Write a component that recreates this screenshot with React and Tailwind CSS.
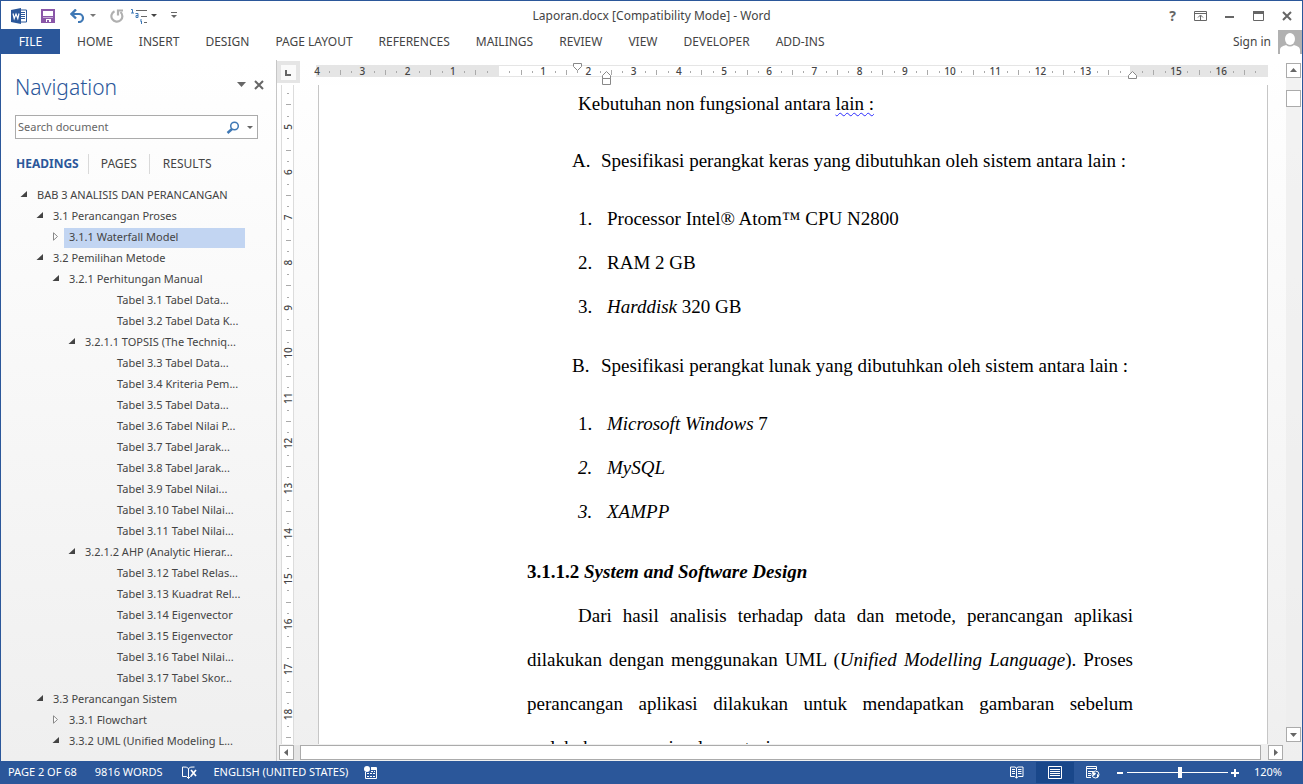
import React from "react";

const RIBBON_TABS = [
  "HOME", "INSERT", "DESIGN", "PAGE LAYOUT", "REFERENCES",
  "MAILINGS", "REVIEW", "VIEW", "DEVELOPER", "ADD-INS",
];

const INDENTS = ["pl-3", "pl-7", "pl-11", "pl-15", "pl-23"];

const HEADINGS = [
  { level: 0, state: "open", text: "BAB 3 ANALISIS DAN PERANCANGAN" },
  { level: 1, state: "open", text: "3.1 Perancangan Proses" },
  { level: 2, state: "closed", text: "3.1.1 Waterfall Model", selected: true },
  { level: 1, state: "open", text: "3.2 Pemilihan Metode" },
  { level: 2, state: "open", text: "3.2.1 Perhitungan Manual" },
  { level: 4, text: "Tabel 3.1 Tabel Data..." },
  { level: 4, text: "Tabel 3.2 Tabel Data K..." },
  { level: 3, state: "open", text: "3.2.1.1 TOPSIS (The Techniq..." },
  { level: 4, text: "Tabel 3.3 Tabel Data..." },
  { level: 4, text: "Tabel 3.4 Kriteria Pem..." },
  { level: 4, text: "Tabel 3.5 Tabel Data..." },
  { level: 4, text: "Tabel 3.6 Tabel Nilai P..." },
  { level: 4, text: "Tabel 3.7 Tabel Jarak..." },
  { level: 4, text: "Tabel 3.8 Tabel Jarak..." },
  { level: 4, text: "Tabel 3.9 Tabel Nilai..." },
  { level: 4, text: "Tabel 3.10 Tabel Nilai..." },
  { level: 4, text: "Tabel 3.11 Tabel Nilai..." },
  { level: 3, state: "open", text: "3.2.1.2 AHP (Analytic Hierar..." },
  { level: 4, text: "Tabel 3.12 Tabel Relas..." },
  { level: 4, text: "Tabel 3.13 Kuadrat Rel..." },
  { level: 4, text: "Tabel 3.14 Eigenvector" },
  { level: 4, text: "Tabel 3.15 Eigenvector" },
  { level: 4, text: "Tabel 3.16 Tabel Nilai..." },
  { level: 4, text: "Tabel 3.17 Tabel Skor..." },
  { level: 1, state: "open", text: "3.3 Perancangan Sistem" },
  { level: 2, state: "closed", text: "3.3.1 Flowchart" },
  { level: 2, state: "open", text: "3.3.2 UML (Unified Modeling L..." },
];

const QUARTER_CM = 11.3;

function Caret({ className }) {
  return (
    <svg width="6" height="3" viewBox="0 0 6 3" className={className} aria-hidden="true">
      <path d="M0 0h6L3 3z" fill="currentColor" />
    </svg>
  );
}

function TitleBar() {
  return (
    <div className="grid h-7 shrink-0 grid-cols-[1fr_auto_1fr] items-center pt-px">
      <div className="flex items-center pl-[10px]">
        <svg width="16" height="16" viewBox="0 0 16 16" aria-hidden="true">
          <path d="M8 2h7.500v12H8z" fill="#fff" stroke="#2b579a" />
          <path d="M10 4.500h4M10 6.500h4M10 8.500h4M10 10.500h4" stroke="#2b579a" />
          <path d="M0 2L10 0v16L0 14z" fill="#2b579a" />
          <path d="M2 5.500l1.200 5L5 6l1.800 4.500L8 5.500" fill="none" stroke="#fff" strokeWidth="1.200" />
        </svg>
        <button aria-label="Save" className="ml-[14px]">
          <svg width="14" height="14" viewBox="0 0 14 14">
            <path d="M1 1h12v12H1z" fill="#fff" stroke="#8a57a8" strokeWidth="2" />
            <path d="M1 7.500h12M2 9h10v4H2z" fill="#8a57a8" stroke="#8a57a8" />
            <path d="M5 10h5v3H5z" fill="#fff" />
            <path d="M6 11h2v3H6z" fill="#8a57a8" />
          </svg>
        </button>
        <button aria-label="Undo" className="ml-[15px] flex items-center gap-[5px] text-[#777]">
          <svg width="15" height="14" viewBox="0 0 15 14">
            <path d="M2 5h7a4 4 0 0 1 0 8H8" fill="none" stroke="#3f78b5" strokeWidth="2.200" />
            <path d="M6 0.500L1.500 5L6 9.500" fill="none" stroke="#3f78b5" strokeWidth="2.400" />
          </svg>
          <Caret />
        </button>
        <button aria-label="Repeat" className="ml-[14px]">
          <svg width="14" height="14" viewBox="0 0 14 14">
            <path d="M4.500 2.200A5.500 5.500 0 1 0 10.500 3" fill="none" stroke="#b0b0b0" strokeWidth="2.200" />
            <path d="M8 6.500V1.500h5" fill="none" stroke="#b0b0b0" strokeWidth="2.200" />
          </svg>
        </button>
        <button aria-label="Multilevel list" className="ml-[7px] flex items-center gap-[3px] text-[#444]">
          <svg width="17" height="16" viewBox="0 0 17 16">
            <path d="M5 2.500h11M10 8.500h6M13 14.500h3" stroke="#666" />
            <path d="M0 1.500h1.500V5M0 5h3M9 10v0M10 11v1.500M9 13h1.500v3" fill="none" stroke="#3f78b5" />
            <path d="M4.500 5.500h2.500v4H5V7.500h2" fill="none" stroke="#3f78b5" />
          </svg>
          <Caret />
        </button>
        <button aria-label="Customize Quick Access Toolbar" className="ml-[14px] text-[#666]">
          <svg width="6" height="7" viewBox="0 0 6 7">
            <path d="M0 .5h6" stroke="currentColor" />
            <path d="M0 3h6L3 6z" fill="currentColor" />
          </svg>
        </button>
      </div>
      <h1 className="text-xs text-[#444]">Laporan.docx [Compatibility Mode] - Word</h1>
      <div className="flex items-center justify-end gap-[18px] pr-[10px] text-[#666]">
        <button aria-label="Help" className="text-sm leading-4 font-bold">?</button>
        <button aria-label="Ribbon display options">
          <svg width="13" height="10" viewBox="0 0 13 10">
            <path d="M.5 .5h12v9H.5zM1 2.500h11M6.500 9V4.500M4 6.500L6.500 4L9 6.500" fill="none" stroke="currentColor" />
          </svg>
        </button>
        <button aria-label="Minimize">
          <svg width="10" height="10" viewBox="0 0 10 10"><path d="M0 6h9" stroke="currentColor" strokeWidth="2" /></svg>
        </button>
        <button aria-label="Maximize">
          <svg width="11" height="10" viewBox="0 0 11 10">
            <path d="M.5 .5h10v9H.5z" fill="none" stroke="currentColor" />
            <path d="M0 0h11v3H0z" fill="currentColor" />
          </svg>
        </button>
        <button aria-label="Close">
          <svg width="10" height="10" viewBox="0 0 10 10"><path d="M1 1l8 8M9 1L1 9" stroke="currentColor" strokeWidth="2" /></svg>
        </button>
      </div>
    </div>
  );
}

function Ribbon() {
  return (
    <div className="mb-[6px] flex h-[25px] shrink-0 items-center text-xs">
      <button className="h-full w-[59px] bg-[#2b579a] text-white">FILE</button>
      <nav className="ml-[17px] flex flex-1 gap-[26px] text-[#444]">
        {RIBBON_TABS.map((tab) => (
          <button key={tab} className="whitespace-nowrap">{tab}</button>
        ))}
      </nav>
      <button className="text-[#444]">Sign in</button>
      <svg width="24" height="24" viewBox="0 0 24 24" className="ml-[7px]" aria-hidden="true">
        <path d="M0 0h24v24H0z" fill="#b1b1b1" />
        <ellipse cx="12" cy="9" rx="5" ry="6" fill="#fff" />
        <path d="M2 24v-4c0-3 3-4 6-5q4 3 8 0c3 1 6 2 6 5v4z" fill="#fff" />
      </svg>
    </div>
  );
}

function Twisty({ state }) {
  return (
    <svg width="8" height="9" viewBox="0 0 8 9" className="mb-[2px] shrink-0" aria-hidden="true">
      {state === "open" && <path d="M7 1v6H.500z" fill="#444" />}
      {state === "closed" && <path d="M1.500 .800v7.400L5.500 4.500z" fill="#fff" stroke="#888" />}
    </svg>
  );
}

function NavigationPane() {
  return (
    <aside className="flex w-[276px] shrink-0 flex-col overflow-hidden border-r border-[#c6c6c6]">
      <div className="flex h-[55px] shrink-0 items-center pr-3 pl-[14px] text-[#666]">
        <h2 className="flex-1 text-[21px] font-light text-[#2b579a]">Navigation</h2>
        <button aria-label="Pane options" className="mb-[6px]">
          <svg width="9" height="5" viewBox="0 0 9 5"><path d="M0 0h9L4.500 5z" fill="currentColor" /></svg>
        </button>
        <button aria-label="Close pane" className="mb-[6px] ml-2">
          <svg width="10" height="10" viewBox="0 0 10 10"><path d="M1 1l8 8M9 1L1 9" stroke="currentColor" strokeWidth="2" /></svg>
        </button>
      </div>
      <div className="mr-[18px] ml-[14px] flex h-6 shrink-0 items-center border border-[#ababab] bg-white">
        <input
          aria-label="Search document"
          placeholder="Search document"
          className="min-w-0 flex-1 pl-[2px] text-[11px] text-[#444] outline-none placeholder:text-[#666]"
        />
        <button aria-label="Search">
          <svg width="14" height="13" viewBox="0 0 14 13">
            <circle cx="8.500" cy="5" r="3.800" fill="#fff" stroke="#3f78b5" strokeWidth="1.500" />
            <path d="M6 8L1.500 12" stroke="#3f78b5" strokeWidth="2.400" />
          </svg>
        </button>
        <button aria-label="Search options" className="mr-1 ml-[7px] text-[#666]"><Caret /></button>
      </div>
      <div className="mt-[15px] flex h-5 shrink-0 items-center pl-[15px] text-xs text-[#444]">
        <button className="pr-[9px] font-bold text-[#2b579a]">HEADINGS</button>
        <button className="h-full border-x border-[#d9d9d9] px-3">PAGES</button>
        <button className="px-[13px]">RESULTS</button>
      </div>
      <ul className="mt-[11px] mb-[13px] min-h-0 flex-1 overflow-hidden text-[11px] text-[#444]">
        {HEADINGS.map((item) => (
          <li key={item.text} className={`flex h-[21px] items-center pr-[31px] ${INDENTS[item.level]}`}>
            <span className="flex w-[23px] shrink-0 justify-center pr-[2px]">
              <Twisty state={item.state} />
            </span>
            <button
              className={`-ml-[4px] h-5 flex-1 pl-[5px] text-left whitespace-nowrap ${item.selected ? "bg-[#c2d5f2]" : ""}`}
            >
              {item.text}
            </button>
          </li>
        ))}
      </ul>
    </aside>
  );
}

function HorizontalRuler() {
  const zero = 181;
  const marks = [];
  for (let k = -16; k <= 67; k++) {
    const x = zero + k * QUARTER_CM;
    if (k % 4 === 0) {
      const n = Math.abs(k / 4);
      if (n !== 0 && n !== 14) {
        marks.push(
          <text key={k} x={x - 1} y="14" textAnchor="middle" fontSize="10" fontWeight="500" fill="#444">{n}</text>
        );
      }
    } else {
      const tall = k % 2 === 0;
      marks.push(
        <rect key={k} x={Math.round(x) - 1} y={tall ? 9 : 10} width="1" height={tall ? 5 : 2} fill="#aaa" />
      );
    }
  }
  return (
    <svg width="950" height="24" viewBox="0 0 950 24" className="mx-auto block overflow-visible" aria-label="Horizontal ruler">
      <path d="M-2 4h952v12H-2z" fill="#e5e5e5" />
      <path d="M181 5h631v10H181z" fill="#fff" />
      {marks}
      <g fill="#fff" stroke="#888">
        <path d="M255.500 2.500h8v3l-4 4l-4-4z" />
        <path d="M284.500 17.500v-3l4-4l4 4v3zM284.500 17.500h8v6h-8z" />
        <path d="M810.500 17.500v-3l4-4l4 4v3z" />
      </g>
    </svg>
  );
}

function VerticalRuler() {
  const marks = [];
  for (let k = -3; k <= 57; k++) {
    const y = 42 + k * QUARTER_CM;
    if (k % 4 === 0) {
      marks.push(
        <text key={k} transform={`translate(11 ${y}) rotate(-90)`} textAnchor="middle" fontSize="10" fontWeight="500" fill="#444">
          {5 + k / 4}
        </text>
      );
    } else {
      const wide = k % 2 === 0;
      marks.push(
        <rect key={k} x={wide ? 5 : 6} y={Math.round(y)} width={wide ? 5 : 2} height="1" fill="#aaa" />
      );
    }
  }
  return (
    <div className="ml-1 min-h-0 w-[13px] overflow-hidden border-x border-[#dcdcdc] bg-white">
      <svg width="13" height="660" viewBox="0 0 13 660" className="-ml-px" aria-label="Vertical ruler">{marks}</svg>
    </div>
  );
}

function ListItem({ marker, children, className = "" }) {
  return (
    <li className={`flex leading-[44px] ${className}`}>
      <span className="w-[29px] shrink-0">{marker}</span>
      <span className="whitespace-nowrap">{children}</span>
    </li>
  );
}

function DocumentPage() {
  return (
    <article className="mx-auto h-full w-[950px] overflow-hidden border-x border-[#c6c6c6] bg-white pr-[134px] pl-[208px] font-['Liberation_Serif',serif] text-[19px] text-black">
      <p className="pl-[51px] leading-[38px]">
        Kebutuhan non fungsional antara{" "}
        <span className="underline decoration-[#2a2aff] decoration-wavy decoration-1 underline-offset-2">lain :</span>
      </p>
      <ol>
        <ListItem marker="A." className="mt-4 pl-[45px]">
          Spesifikasi perangkat keras yang dibutuhkan oleh sistem antara lain :
        </ListItem>
      </ol>
      <ol className="mt-[14px] pl-[51px]">
        <ListItem marker="1.">Processor Intel® Atom™ CPU N2800</ListItem>
        <ListItem marker="2.">RAM 2 GB</ListItem>
        <ListItem marker="3."><i>Harddisk</i> 320 GB</ListItem>
      </ol>
      <ol>
        <ListItem marker="B." className="mt-[15px] pl-[45px]">
          Spesifikasi perangkat lunak yang dibutuhkan oleh sistem antara lain :
        </ListItem>
      </ol>
      <ol className="mt-[14px] pl-[51px]">
        <ListItem marker="1."><i>Microsoft Windows</i> 7</ListItem>
        <ListItem marker={<i>2.</i>}><i>MySQL</i></ListItem>
        <ListItem marker={<i>3.</i>}><i>XAMPP</i></ListItem>
      </ol>
      <h3 className="mt-4 leading-[44px] font-bold">3.1.1.2 <i>System and Software Design</i></h3>
      <p className="text-justify indent-[51px] leading-[44px]">
        Dari hasil analisis terhadap data dan metode, perancangan aplikasi dilakukan dengan
        menggunakan UML (<i>Unified Modelling Language</i>). Proses perancangan aplikasi dilakukan
        untuk mendapatkan gambaran sebelum melakukan proses implementasi.
      </p>
    </article>
  );
}

function ScrollButton({ label, d }) {
  return (
    <button aria-label={label} className="flex size-[15px] shrink-0 items-center justify-center border border-[#ababab] bg-white text-[#666]">
      <svg width="9" height="9" viewBox="0 0 9 9"><path d={d} fill="currentColor" /></svg>
    </button>
  );
}

function Workspace() {
  return (
    <main className="flex min-w-0 flex-1 flex-col">
      <div className="flex min-h-0 flex-1">
        <div className="grid min-h-0 min-w-0 flex-1 grid-cols-[24px_minmax(0,1fr)] grid-rows-[25px_minmax(0,1fr)]">
          <div className="mt-px flex h-[22px] w-[23px] items-center justify-center bg-[#e5e5e5]">
            <button aria-label="Tab selector" className="flex size-[15px] items-center justify-center bg-[#fafafa]">
              <svg width="7" height="7" viewBox="0 0 7 7"><path d="M1 1v5h5" fill="none" stroke="#666" strokeWidth="2" /></svg>
            </button>
          </div>
          <div className="pt-px"><HorizontalRuler /></div>
          <VerticalRuler />
          <div className="min-h-0"><DocumentPage /></div>
        </div>
        <div className="flex w-[17px] flex-col pt-[3px] pr-px pb-[2px] pl-px">
          <ScrollButton label="Scroll up" d="M4.500 2L8 6H1z" />
          <div className="flex-1 bg-[#ececec]/70 pt-3">
            <div className="h-[17px] w-[15px] border border-[#ababab] bg-white" />
          </div>
          <ScrollButton label="Scroll down" d="M1 3h7L4.500 7z" />
        </div>
      </div>
      <div className="flex h-[17px] shrink-0 items-center pr-[19px] pl-[2px]">
        <ScrollButton label="Scroll left" d="M6 1v7L2 4.500z" />
        <div className="mr-[7px] flex h-[15px] flex-1 bg-[#e5e5e5] pl-[6px]">
          <div className="h-full flex-1 border border-[#ababab] bg-white" />
        </div>
        <ScrollButton label="Scroll right" d="M3 1v7L7 4.500z" />
      </div>
    </main>
  );
}

function StatusBar() {
  return (
    <footer className="flex h-[23px] shrink-0 items-center bg-[#2b579a] pl-[7px] text-[11px] whitespace-nowrap text-white">
      <button>PAGE 2 OF 68</button>
      <button className="ml-[18px]">9816 WORDS</button>
      <button aria-label="Proofing errors" className="ml-5">
        <svg width="15" height="13" viewBox="0 0 15 13" fill="none" stroke="#fff">
          <path d="M6.500 12.500V2.500Q5 .5 .5 1v9.500h4l2 2l2-2h1M6.500 2.500Q8 .5 12.500 1" />
          <path d="M9 4l5 6M14 4L9 10" strokeWidth="1.700" />
        </svg>
      </button>
      <button className="ml-4">ENGLISH (UNITED STATES)</button>
      <button aria-label="Record macro" className="ml-4">
        <svg width="13" height="13" viewBox="0 0 13 13">
          <path d="M1.500 6v6.500h11v-11H7" fill="none" stroke="#fff" />
          <path d="M7 2h6v2H7z" fill="#fff" />
          <circle cx="3" cy="3" r="3" fill="#fff" />
          <path d="M3 7.500h8M3 10.500h8M7 5.500h4" stroke="#fff" strokeDasharray="2 1" />
        </svg>
      </button>
      <div className="ml-auto flex h-full items-center">
        <button aria-label="Read mode" className="mr-3">
          <svg width="14" height="13" viewBox="0 0 14 13" fill="none" stroke="#fff">
            <path d="M.5 1h4.500l1.500 1L8 1h5v9.500H8.500L6.500 12l-2-1.500h-4zM6.500 2v10M2 3.500h3M2 5.500h3M2 7.500h3M8 3.500h3.500M8 5.500h3.500M8 7.500h3.500" />
          </svg>
        </button>
        <button aria-label="Print layout" className="flex h-[21px] w-[38px] items-center justify-center bg-[#19478a]">
          <svg width="14" height="13" viewBox="0 0 14 13" fill="none" stroke="#fff">
            <path d="M.5 .5h13v12H.5zM2 3.500h10M2 5.500h10M2 7.500h10M2 9.500h10" />
          </svg>
        </button>
        <button aria-label="Web layout" className="ml-3">
          <svg width="14" height="13" viewBox="0 0 14 13" fill="none" stroke="#fff">
            <path d="M5 11.500H.5v-11h10V4M.5 2.500h10M2 5.500h5M2 7.500h3M2 9.500h3" />
            <circle cx="9.500" cy="8.500" r="3.500" fill="#2b579a" />
            <path d="M7 6l3 1l-1 2l-2 1zM11 8l2 1l-2 3z" fill="#fff" stroke="none" />
          </svg>
        </button>
        <button aria-label="Zoom out" className="ml-4 py-2">
          <svg width="8" height="8" viewBox="0 0 8 8"><path d="M1 4h6" stroke="#fff" strokeWidth="2" /></svg>
        </button>
        <input
          type="range"
          aria-label="Zoom"
          min="0"
          max="100"
          defaultValue="53"
          className="mx-[3px] h-3 w-[101px] appearance-none bg-[linear-gradient(#fff,#fff)] bg-[length:100%_1px] bg-center bg-no-repeat [&::-webkit-slider-thumb]:h-[11px] [&::-webkit-slider-thumb]:w-1 [&::-webkit-slider-thumb]:appearance-none [&::-webkit-slider-thumb]:bg-white"
        />
        <button aria-label="Zoom in" className="py-2">
          <svg width="8" height="8" viewBox="0 0 8 8"><path d="M0 4h8M4 0v8" stroke="#fff" strokeWidth="2" /></svg>
        </button>
        <button className="mr-5 ml-[15px]">120%</button>
      </div>
    </footer>
  );
}

export default function App() {
  return (
    <div className="flex h-screen flex-col overflow-hidden border-x border-t border-[#2b579a] bg-white font-['Noto_Sans','Open_Sans',sans-serif]">
      <TitleBar />
      <Ribbon />
      <div className="flex min-h-0 flex-1 bg-linear-to-b from-white to-[#efefef]">
        <NavigationPane />
        <Workspace />
      </div>
      <StatusBar />
    </div>
  );
}
